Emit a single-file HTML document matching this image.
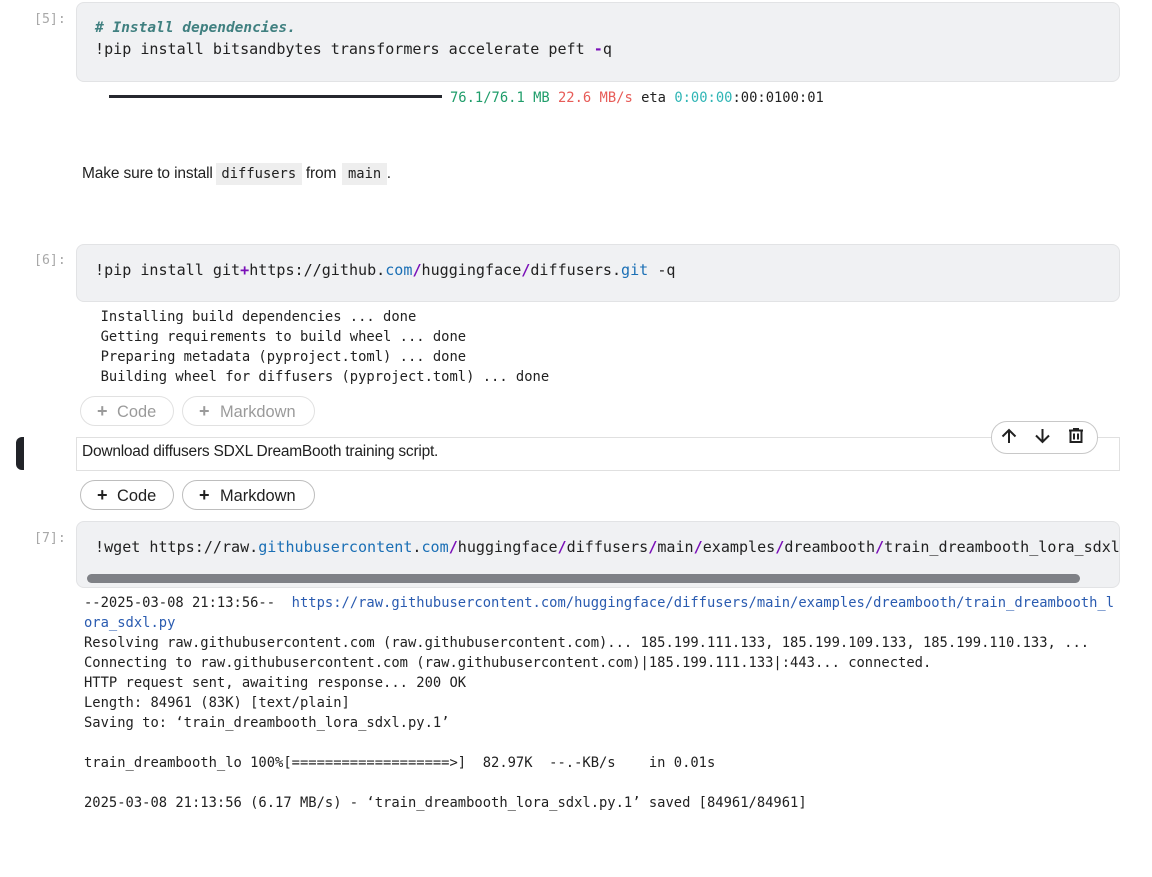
<!DOCTYPE html>
<html><head><meta charset="utf-8">
<style>
html,body{margin:0;padding:0;background:#fff;width:1152px;height:877px;overflow:hidden}
.a{position:absolute;white-space:pre}
.m{font-family:"DejaVu Sans Mono","Liberation Mono",monospace}
.c{font-size:15.07px;line-height:20px;color:#212121}
.o{font-size:13.8px;line-height:20px;color:#212121}
.s{font-family:"Liberation Sans",sans-serif}
.p{font-size:15.5px;line-height:20px;color:#212121;letter-spacing:-.23px}
.n{font-size:13.2px;line-height:16px;color:#a8a8a8}
.box{position:absolute;left:76px;width:1042px;background:#f0f1f3;border:1px solid #e2e3e5;border-radius:8px}
.btn{position:absolute;box-sizing:border-box;height:30px;border:1px solid #bdbdbd;border-radius:15px;font-family:"Liberation Sans",sans-serif;font-size:16.4px;line-height:30px;color:#212121;white-space:pre}
.btn span{position:absolute;top:0}
.btn b{position:absolute;font-weight:700;font-size:18px;top:-1px}
.f{opacity:.45}
.k{color:#7a10b8;font-weight:bold}
.u{color:#1a6fb5}
.l{color:#2a5bb0}
code{font-family:"DejaVu Sans Mono","Liberation Mono",monospace;font-size:13.8px;background:#eeeeee;padding:3px 5.500px;letter-spacing:0}
</style></head><body>

<div class="a m n" style="left:34px;top:12px">[5]:</div>
<div class="box" style="top:2px;height:78px"></div>
<div class="a m" style="left:95px;top:18px;color:#408080;font-style:italic;font-weight:bold;font-size:14.5px;line-height:20px"># Install dependencies.</div>
<div class="a m c" style="left:95px;top:39px">!pip install bitsandbytes transformers accelerate peft <span class="k">-</span>q</div>

<div class="a" style="left:109px;top:95px;width:333px;height:3px;background:#26282e"></div>
<div class="a m o" style="left:450px;top:88px"><span style="color:#1f9d6a">76.1/76.1 MB</span> <span style="color:#e75c58">22.6 MB/s</span> eta <span style="color:#2fb5b5">0:00:00</span>:00:0100:01</div>

<div class="a s p" style="left:82px;top:164px;letter-spacing:-.14px">Make sure to install <code style="margin-left:-1px">diffusers</code> from <code style="margin-left:2px">main</code>.</div>

<div class="a m n" style="left:34px;top:253px">[6]:</div>
<div class="box" style="top:244px;height:56px"></div>
<div class="a m c" style="left:95px;top:260px">!pip install git<span class="k">+</span>https://github.<span class="u">com</span><span class="k">/</span>huggingface<span class="k">/</span>diffusers.<span class="u">git</span> -q</div>

<div class="a m o" style="left:84px;top:307px">  Installing build dependencies ... done
  Getting requirements to build wheel ... done
  Preparing metadata (pyproject.toml) ... done
  Building wheel for diffusers (pyproject.toml) ... done</div>

<div class="btn f" style="left:80px;top:396px;width:94px"><b style="left:16px">+</b><span style="left:36px">Code</span></div>
<div class="btn f" style="left:182px;top:396px;width:133px"><b style="left:16px">+</b><span style="left:37px">Markdown</span></div>

<div class="a" style="left:16px;top:437px;width:8px;height:33px;background:#212328;border-radius:6px 0 0 6px"></div>
<div class="a" style="left:76px;top:437px;width:1042px;height:32px;border:1px solid #e0e0e0"></div>
<div class="a s p" style="left:82px;top:442px">Download diffusers SDXL DreamBooth training script.</div>

<div class="a" style="left:991px;top:421px;width:105px;height:31px;background:#fff;border:1px solid #c8c8c8;border-radius:16px"></div>
<svg class="a" style="left:999px;top:426px" width="88" height="20" viewBox="0 0 88 20" fill="none" stroke="#212121" stroke-width="2">
<path d="M10 17V4M3.500 10.500L10 4l6.500 6.500"/>
<path d="M43.500 3v13M37 9.500l6.500 6.500 6.500-6.500"/>
<path d="M70 4.500h14M74 3h6M71.500 4.500V16h11V4.500M75 7.500v6M79 7.500v6"/>
</svg>

<div class="btn" style="left:80px;top:480px;width:94px"><b style="left:16px">+</b><span style="left:36px">Code</span></div>
<div class="btn" style="left:182px;top:480px;width:133px"><b style="left:16px">+</b><span style="left:37px">Markdown</span></div>

<div class="a m n" style="left:34px;top:531px">[7]:</div>
<div class="box" style="top:521px;height:65px"></div>
<div class="a m c" style="left:95px;top:537px;width:1024px;overflow:hidden">!wget https://raw.<span class="u">githubusercontent</span>.<span class="u">com</span><span class="k">/</span>huggingface<span class="k">/</span>diffusers<span class="k">/</span>main<span class="k">/</span>examples<span class="k">/</span>dreambooth<span class="k">/</span>train_dreambooth_lora_sdxl</div>
<div class="a" style="left:87px;top:574px;width:993px;height:9px;background:#7f8186;border-radius:5px"></div>

<div class="a m o" style="left:84px;top:593px">--2025-03-08 21:13:56--  <span class="l">https://raw.githubusercontent.com/huggingface/diffusers/main/examples/dreambooth/train_dreambooth_l
ora_sdxl.py</span>
Resolving raw.githubusercontent.com (raw.githubusercontent.com)... 185.199.111.133, 185.199.109.133, 185.199.110.133, ...
Connecting to raw.githubusercontent.com (raw.githubusercontent.com)|185.199.111.133|:443... connected.
HTTP request sent, awaiting response... 200 OK
Length: 84961 (83K) [text/plain]
Saving to: ‘train_dreambooth_lora_sdxl.py.1’

train_dreambooth_lo 100%[===================&gt;]  82.97K  --.-KB/s    in 0.01s

2025-03-08 21:13:56 (6.17 MB/s) - ‘train_dreambooth_lora_sdxl.py.1’ saved [84961/84961]</div>
</body></html>
